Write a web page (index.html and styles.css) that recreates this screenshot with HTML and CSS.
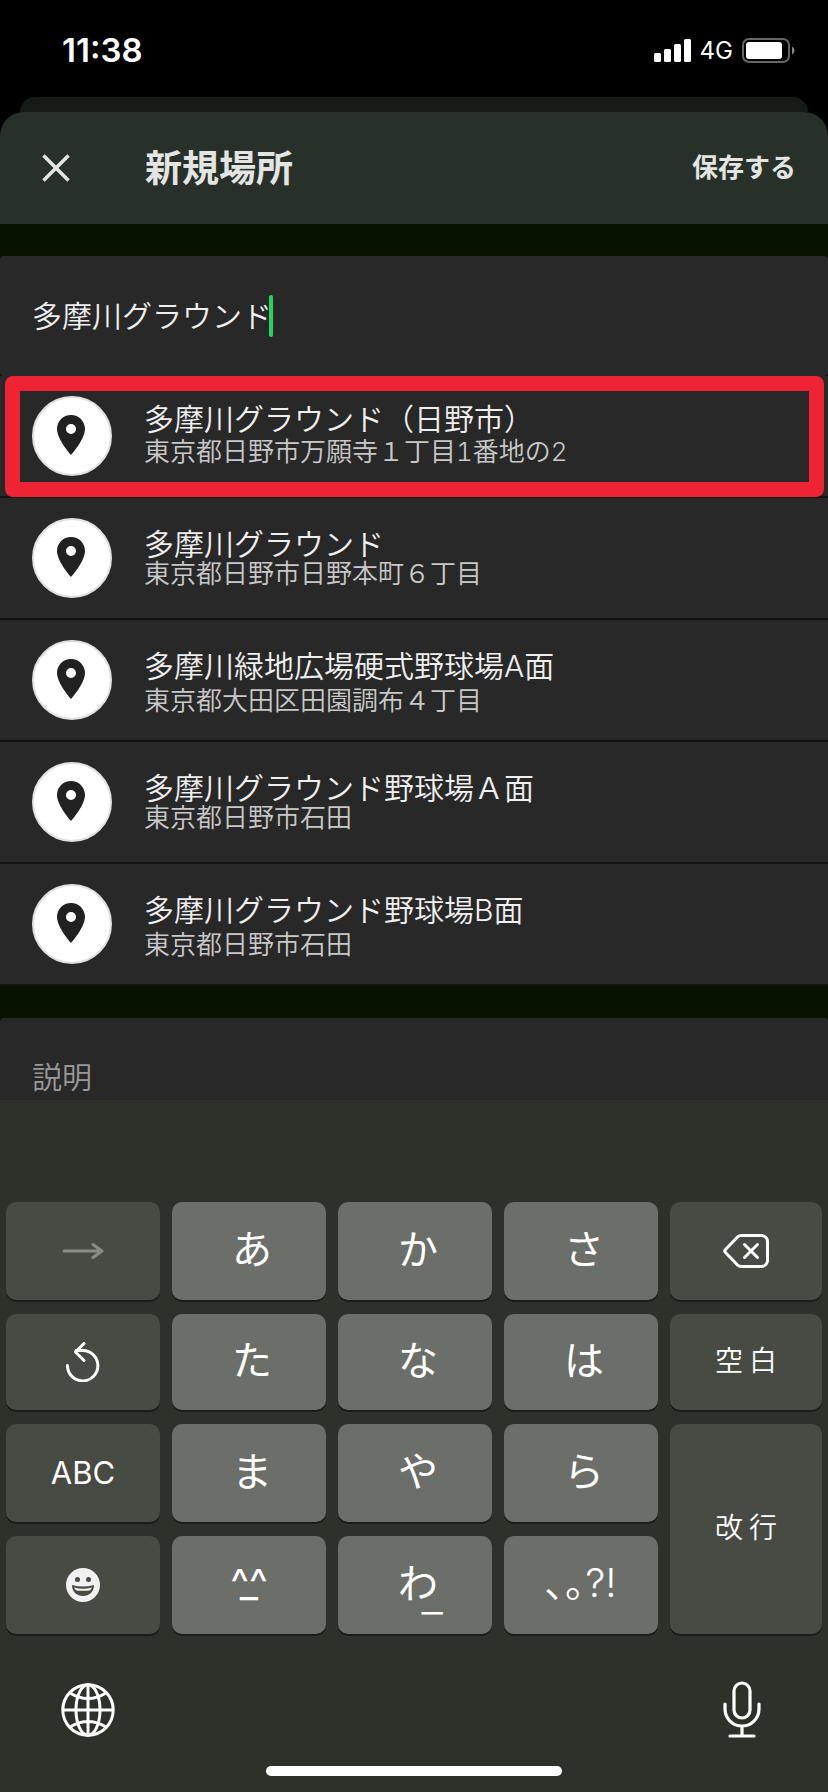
FILE: index.html
```html
<!DOCTYPE html>
<html lang="ja">
<head>
<meta charset="utf-8">
<meta name="viewport" content="width=device-width, initial-scale=1">
<title>新規場所</title>
<link rel="stylesheet" href="styles.css">
</head>
<body>
<svg class="defs" aria-hidden="true">
  <symbol id="pin" viewBox="0 0 24 24"><path fill="#212121" fill-rule="evenodd" d="M12 2C8.1 2 5 5.1 5 9c0 5.2 7 13 7 13s7-7.800 7-13c0-3.900-3.100-7-7-7zm0 9.500a2.500 2.500 0 1 1 0-5 2.500 2.500 0 0 1 0 5z"/></symbol>
</svg>
<div class="statusbar">
  <span class="time">11:38</span>
  <div class="indicators">
    <svg width="37" height="23" viewBox="0 0 37 23" fill="#fff" aria-hidden="true"><rect y="14" width="7" height="9" rx="1.500"/><rect x="10" y="10" width="7" height="13" rx="1.500"/><rect x="20" y="5" width="7" height="18" rx="1.500"/><rect x="30" width="7" height="23" rx="1.500"/></svg>
    <span class="network">4G</span>
    <svg width="53" height="25" viewBox="0 0 53 25" aria-hidden="true"><rect x="1" y="1" width="46" height="23" rx="6" fill="none" stroke="#666" stroke-width="2"/><rect x="4" y="4" width="36" height="17" rx="3" fill="#fff"/><path d="M50 8.500a4.500 4.500 0 0 1 0 8z" fill="#888"/></svg>
  </div>
</div>
<div class="sheet-behind"></div>
<main class="sheet">
  <header class="header">
    <button class="close" type="button" aria-label="閉じる"><svg width="28" height="28" viewBox="0 0 28 28" fill="none" stroke="#e3e5e3" stroke-width="3.500"><path d="M1.500 1.500l25 25M26.500 1.500l-25 25"/></svg></button>
    <h1 class="title">新規場所</h1>
    <button class="save" type="button">保存する</button>
  </header>
  <div class="search">
    <input class="search-input" type="text" value="多摩川グラウンド" aria-label="場所">
    <span class="caret"></span>
  </div>
  <ul class="places">
    <li class="place selected">
      <span class="badge"><svg width="48" height="48"><use href="#pin"/></svg></span>
      <div class="text raised"><span class="name">多摩川グラウンド（日野市）</span><span class="address">東京都日野市万願寺１丁目1番地の2</span></div>
    </li>
    <li class="place">
      <span class="badge"><svg width="48" height="48"><use href="#pin"/></svg></span>
      <div class="text"><span class="name">多摩川グラウンド</span><span class="address">東京都日野市日野本町６丁目</span></div>
    </li>
    <li class="place">
      <span class="badge"><svg width="48" height="48"><use href="#pin"/></svg></span>
      <div class="text loose"><span class="name">多摩川緑地広場硬式野球場A面</span><span class="address">東京都大田区田園調布４丁目</span></div>
    </li>
    <li class="place">
      <span class="badge"><svg width="48" height="48"><use href="#pin"/></svg></span>
      <div class="text"><span class="name">多摩川グラウンド野球場Ａ面</span><span class="address">東京都日野市石田</span></div>
    </li>
    <li class="place">
      <span class="badge"><svg width="48" height="48"><use href="#pin"/></svg></span>
      <div class="text loose"><span class="name">多摩川グラウンド野球場B面</span><span class="address">東京都日野市石田</span></div>
    </li>
  </ul>
  <textarea class="description" placeholder="説明" aria-label="説明" rows="1"></textarea>
</main>
<section class="keyboard" aria-label="キーボード">
  <div class="keys">
    <button class="key fn" type="button" aria-label="次候補"><svg width="42" height="18" viewBox="0 0 42 18" fill="none" stroke="#8a8c86" stroke-width="3" stroke-linecap="round" stroke-linejoin="round"><path d="M2 9h37M31 2.500L40 9l-9 6.500"/></svg></button>
    <button class="key kana" type="button">あ</button>
    <button class="key kana" type="button">か</button>
    <button class="key kana" type="button">さ</button>
    <button class="key fn" type="button" aria-label="削除"><svg width="46" height="34" viewBox="0 0 46 34" fill="none" stroke="#fff" stroke-width="3" stroke-linecap="round" stroke-linejoin="round"><path d="M18 1.500h20.500a6 6 0 0 1 6 6v19a6 6 0 0 1-6 6H18q-2 0-3.500-1.500L2.500 18.500q-1.500-1.500 0-3L14.500 3Q16 1.500 18 1.500zM21.500 10.500l13 13M34.500 10.500l-13 13"/></svg></button>
    <button class="key fn" type="button" aria-label="戻す"><svg width="34" height="40" viewBox="0 0 34 40" fill="none" stroke="#fff" stroke-width="3" stroke-linecap="round" stroke-linejoin="round"><path d="M1.500 23.500A15.200 15.200 0 1 0 16.700 8.500H10M18 1.500L9.500 10l8.500 8.500"/></svg></button>
    <button class="key kana" type="button">た</button>
    <button class="key kana" type="button">な</button>
    <button class="key kana" type="button">は</button>
    <button class="key fn word" type="button"><span>空</span><span>白</span></button>
    <button class="key fn abc" type="button">ABC</button>
    <button class="key kana" type="button">ま</button>
    <button class="key kana" type="button">や</button>
    <button class="key kana" type="button">ら</button>
    <button class="key fn word enter" type="button"><span>改</span><span>行</span></button>
    <button class="key fn" type="button" aria-label="絵文字"><svg width="34" height="34" viewBox="0 0 34 34"><circle cx="17" cy="17" r="17" fill="#f1f1f1"/><g fill="#484a44"><circle cx="11.500" cy="11.500" r="2.500"/><circle cx="22.500" cy="11.500" r="2.500"/><path d="M6 17q11 3 22 0c0 7-5 11-11 11S6 24 6 17z"/></g><path d="M8 19.500q9 2.600 18 0-1.500 3.300-4 3.300H12q-2.500 0-4-3.300z" fill="#f1f1f1"/></svg></button>
    <button class="key face" type="button"><span class="eyes">^^</span><span class="mouth">_</span></button>
    <button class="key kana" type="button">わ<span class="bar">_</span></button>
    <button class="key marks" type="button">､｡?!</button>
  </div>
  <div class="tools">
    <button class="tool" type="button" aria-label="次のキーボード"><svg width="54" height="54" viewBox="0 0 54 54" fill="none" stroke="#fff" stroke-width="3"><circle cx="27" cy="27" r="25.200"/><ellipse cx="27" cy="27" rx="12" ry="25.200"/><path d="M27 2v50M2 27h50M9 10q18 11 36 0M9 44q18-11 36 0"/></svg></button>
    <button class="tool" type="button" aria-label="音声入力"><svg width="38" height="57" viewBox="0 0 38 57" fill="none" stroke="#fff" stroke-width="3.200" stroke-linecap="round"><rect x="11" y="2" width="16" height="35" rx="8"/><path d="M2 23v5a17 17 0 0 0 34 0v-5M19 45v9M7 55h24"/></svg></button>
  </div>
  <div class="home"></div>
</section>
</body>
</html>
```
FILE: styles.css
```css
* { box-sizing: border-box; }
body {
  margin: 0;
  min-height: 100vh;
  display: flex;
  flex-direction: column;
  background: #000;
  color: #efefef;
  font-family: Inter, "Noto Sans CJK JP", sans-serif;
}
button { border: 0; padding: 0; background: none; color: inherit; font-family: inherit; }
svg { display: block; }
.defs { position: absolute; width: 0; height: 0; }

.statusbar {
  height: 97px;
  padding: 3px 33px 0 62px;
  display: flex;
  align-items: center;
  justify-content: space-between;
  color: #fff;
}
.time { font-size: 33px; font-weight: 600; }
.indicators { display: flex; align-items: center; gap: 9px; }
.network { font-size: 24px; font-weight: 400; line-height: 25px; }

.sheet-behind { height: 15px; margin: 0 20px; border-radius: 24px 24px 0 0; background: #161a17; }
.sheet { background: linear-gradient(#000 24px, #081200 24px); display: flex; flex-direction: column; }
.header {
  height: 112px;
  margin-bottom: 32px;
  padding: 0 32px 0 42px;
  display: flex;
  align-items: center;
  border-radius: 24px 24px 0 0;
  background: #28302a;
  color: #e3e5e3;
}
.title { flex: 1; margin: 2px 0 0 75px; font-size: 37px; line-height: 48px; font-weight: 700; }
.save { font-size: 26px; line-height: 32px; font-weight: 700; }

.search {
  position: relative;
  height: 120px;
  display: flex;
  border-radius: 4px;
  background: #282828;
  font-size: 30px;
}
.search-input {
  flex: 1;
  min-width: 0;
  padding: 0 32px 5px;
  border: 0;
  outline: 0;
  background: none;
  color: inherit;
  font: inherit;
  font-weight: 350;
}
.caret {
  position: absolute;
  left: calc(29px + 8em);
  top: 39px;
  width: 4px;
  height: 42px;
  border-radius: 2px;
  background: #1ed760;
}

.places { list-style: none; margin: 0 0 32px; padding: 0; }
.place {
  position: relative;
  height: 122px;
  padding: 20px 32px 0;
  display: flex;
  align-items: flex-start;
  gap: 32px;
  border-bottom: 2px solid #121212;
  background: #282828;
}
.selected::after {
  content: "";
  position: absolute;
  inset: 0 4px -1px 5px;
  border: 15px solid #ee2435;
  border-radius: 8px;
}
.badge { width: 80px; height: 80px; padding: 13px; border: 2px solid #e0e0e0; border-radius: 50%; background: #fff; }
.text { padding-top: 11px; display: flex; flex-direction: column; gap: 2px; font-weight: 350; }
.raised { padding-top: 8px; gap: 5px; }
.loose { gap: 7px; }
.name { font-size: 30px; line-height: 30px; }
.address { font-size: 26px; line-height: 26px; font-variant-numeric: tabular-nums; color: #c8c8c8; }

.description {
  height: 82px;
  padding: 40px 32px 0;
  border: 0;
  border-radius: 4px 4px 0 0;
  outline: 0;
  overflow: hidden;
  resize: none;
  background: #282828;
  font: 350 30px/38px Inter, "Noto Sans CJK JP", sans-serif;
}
.description::placeholder { color: #989898; opacity: 1; }

.keyboard { flex: 1; padding: 102px 6px 16px; display: flex; flex-direction: column; background: #2d312a; color: #fff; }
.keys {
  display: grid;
  grid-template-columns: repeat(4, 154fr) 152fr;
  grid-template-rows: 98px 96px 98px 98px;
  gap: 14px 12px;
}
.key {
  position: relative;
  display: flex;
  align-items: center;
  justify-content: center;
  border-radius: 10px;
  background: #6c6e69;
  box-shadow: 0 2px 0 #1b1d18;
  font-family: "Noto Sans CJK JP", sans-serif;
  font-size: 40px;
  line-height: 48px;
}
.fn { background: #484a44; }
.kana { padding: 0 0 8px 6px; }
.word { gap: 6px; padding-bottom: 6px; font-size: 28px; font-weight: 350; }
.abc { font-family: Inter, sans-serif; font-size: 31px; }
.enter { grid-row: span 2; }
.face { display: grid; place-content: center; justify-items: center; padding-bottom: 4px; font-family: Inter, sans-serif; line-height: 40px; }
.eyes, .mouth { grid-area: 1 / 1; }
.bar { position: absolute; left: calc(50% + 6px); top: 32px; }
.marks { padding-bottom: 4px; font-family: Inter, "Noto Sans CJK JP", sans-serif; font-weight: 350; }

.tools { margin-top: 47px; padding: 0 61px 0 55px; display: flex; align-items: center; justify-content: space-between; }
.home { width: 296px; height: 10px; margin: auto auto 0; border-radius: 5px; background: #fff; }
```
